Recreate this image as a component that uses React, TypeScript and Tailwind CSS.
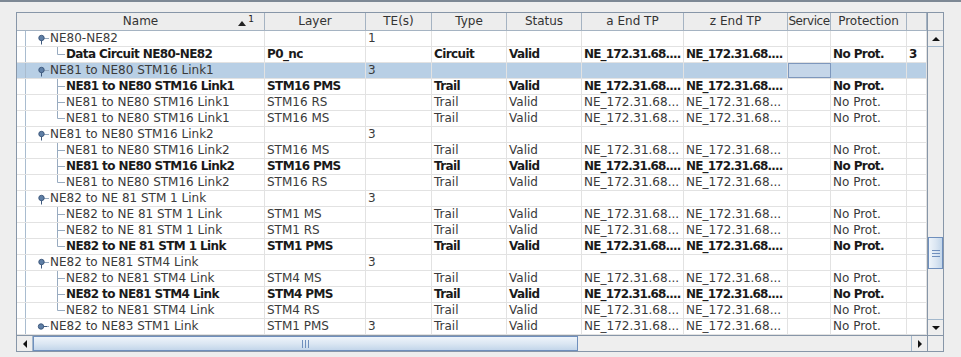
import React from "react";

type Kind = "open" | "closed" | "child";

interface Row {
  kind: Kind;
  last?: boolean;
  bold?: boolean;
  selected?: boolean;
  name: string;
  layer?: string;
  te?: string;
  type?: string;
  status?: string;
  a?: string;
  z?: string;
  prot?: string;
  extra?: string;
}

const cols = [
  { key: "name", w: "w-[248px]", label: "Name", head: "" },
  { key: "layer", w: "w-[101px]", label: "Layer", head: "" },
  { key: "te", w: "w-[66px]", label: "TE(s)", head: "" },
  { key: "type", w: "w-[75px]", label: "Type", head: "" },
  { key: "status", w: "w-[75px]", label: "Status", head: "" },
  { key: "a", w: "w-[102px]", label: "a End TP", head: "" },
  { key: "z", w: "w-[104px]", label: "z End TP", head: "" },
  { key: "service", w: "w-[43px]", label: "Service", head: "tracking-[-0.45px]" },
  { key: "prot", w: "w-[76px]", label: "Protection", head: "" },
  { key: "extra", w: "w-[20px]", label: "", head: "" },
];

// trail child rows share everything but name, layer, weight
const trail = (name: string, layer: string, bold = false, last = false): Row => ({
  kind: "child",
  name,
  layer,
  bold,
  last,
  type: "Trail",
  status: "Valid",
  a: bold ? "NE_172.31.68...." : "NE_172.31.68...",
  z: bold ? "NE_172.31.68...." : "NE_172.31.68...",
  prot: "No Prot.",
});

const rows: Row[] = [
  { kind: "open", name: "NE80-NE82", te: "1" },
  {
    kind: "child",
    last: true,
    bold: true,
    name: "Data Circuit NE80-NE82",
    layer: "P0_nc",
    type: "Circuit",
    status: "Valid",
    a: "NE_172.31.68....",
    z: "NE_172.31.68....",
    prot: "No Prot.",
    extra: "3",
  },
  { kind: "open", name: "NE81 to NE80 STM16 Link1", te: "3", selected: true },
  trail("NE81 to NE80 STM16 Link1", "STM16 PMS", true),
  trail("NE81 to NE80 STM16 Link1", "STM16 RS"),
  trail("NE81 to NE80 STM16 Link1", "STM16 MS", false, true),
  { kind: "open", name: "NE81 to NE80 STM16 Link2", te: "3" },
  trail("NE81 to NE80 STM16 Link2", "STM16 MS"),
  trail("NE81 to NE80 STM16 Link2", "STM16 PMS", true),
  trail("NE81 to NE80 STM16 Link2", "STM16 RS", false, true),
  { kind: "open", name: "NE82 to NE 81 STM 1 Link", te: "3" },
  trail("NE82 to NE 81 STM 1 Link", "STM1 MS"),
  trail("NE82 to NE 81 STM 1 Link", "STM1 RS"),
  trail("NE82 to NE 81 STM 1 Link", "STM1 PMS", true, true),
  { kind: "open", name: "NE82 to NE81 STM4 Link", te: "3" },
  trail("NE82 to NE81 STM4 Link", "STM4 MS"),
  trail("NE82 to NE81 STM4 Link", "STM4 PMS", true),
  trail("NE82 to NE81 STM4 Link", "STM4 RS", false, true),
  {
    kind: "closed",
    name: "NE82 to NE83 STM1 Link",
    layer: "STM1 PMS",
    te: "3",
    type: "Trail",
    status: "Valid",
    a: "NE_172.31.68...",
    z: "NE_172.31.68...",
    prot: "No Prot.",
  },
];

function TreeGlyph({ kind, last }: { kind: Kind; last?: boolean }) {
  const line = "#98abc0";
  const knob = "#3f5a7e";
  const w = kind === "child" ? 49 : 33;
  return (
    <svg width={w} height={15} className="shrink-0 overflow-visible" viewBox={`0 0 ${w} 15`}>
      <line x1={8.5} y1={0} x2={8.5} y2={16} stroke="#a9bccf" />
      {kind === "open" && (
        <g>
          <line x1={24.5} y1={9} x2={24.5} y2={13.5} stroke={knob} />
          <line x1={27} y1={7.5} x2={32} y2={7.5} stroke={line} />
          <circle cx={24.5} cy={7} r={2.7} fill="#5f7fa6" stroke={knob} />
        </g>
      )}
      {kind === "closed" && (
        <g>
          <line x1={26} y1={7.5} x2={30} y2={7.5} stroke={knob} />
          <line x1={30} y1={7.5} x2={32} y2={7.5} stroke={line} />
          <circle cx={24} cy={7.5} r={2.7} fill="#5f7fa6" stroke={knob} />
        </g>
      )}
      {kind === "child" && (
        <g>
          <line x1={40.5} y1={0} x2={40.5} y2={last ? 7.5 : 16} stroke={line} />
          <line x1={40.5} y1={7.5} x2={48} y2={7.5} stroke={line} />
        </g>
      )}
    </svg>
  );
}

function Arrow({ dir }: { dir: "up" | "down" | "left" | "right" }) {
  const pts = {
    up: "0,4 8,4 4,0",
    down: "0,0 8,0 4,4",
    left: "4,0 4,8 0,4",
    right: "0,0 0,8 4,4",
  }[dir];
  const vert = dir === "up" || dir === "down";
  return (
    <svg width={vert ? 8 : 4} height={vert ? 4 : 8} viewBox={vert ? "0 0 8 4" : "0 0 4 8"}>
      <polygon points={pts} fill="#111" />
    </svg>
  );
}

function DataRow({ row }: { row: Row }) {
  const text = row.bold ? "font-bold text-[#1a1a1a]" : "text-[#3a3a3a]";
  const values: Record<string, string | undefined> = {
    layer: row.layer,
    te: row.te,
    type: row.type,
    status: row.status,
    a: row.a,
    z: row.z,
    service: "",
    prot: row.prot,
    extra: row.extra,
  };
  return (
    <div className={`flex h-[16px] border-b border-[#e2e2e2] ${row.selected ? "bg-[#b8cfe5]" : "bg-white"}`}>
      {cols.map((c) => {
        const track = row.bold
          ? c.key === "a" || c.key === "z"
            ? "tracking-[-0.85px]"
            : "tracking-[-0.6px]"
          : "";
        if (c.key === "name") {
          return (
            <div key={c.key} className={`${c.w} shrink-0 flex items-center border-r border-[#e2e2e2] overflow-hidden whitespace-nowrap leading-[15px] ${text} ${track}`}>
              <TreeGlyph kind={row.kind} last={row.last} />
              <span>{row.name}</span>
            </div>
          );
        }
        if (c.key === "service" && row.selected) {
          return <div key={c.key} className={`${c.w} shrink-0 border border-[#7d97bd] bg-[#c5d6e9]`} />;
        }
        return (
          <div key={c.key} className={`${c.w} shrink-0 pl-[2px] border-r border-[#e2e2e2] overflow-hidden whitespace-nowrap leading-[15px] ${text} ${track}`}>
            {values[c.key]}
          </div>
        );
      })}
    </div>
  );
}

export default function App() {
  return (
    <div className="w-[961px] h-[357px] bg-[#eeeeee] overflow-hidden font-['DejaVu_Sans',sans-serif] text-[12px]">
      <div className="h-[2px] bg-[#7d8894]" />
      <div className="pt-[10px] pl-[16px]">
        <div className="w-[928px] border border-[#8796a8] flex flex-col">
          <div className="flex">
            {/* table */}
            <div className="w-[910px] flex flex-col">
              <div className="flex h-[18px] border-b border-[#a5b3c2] bg-[#ededed]">
                {cols.map((c) => (
                  <div
                    key={c.key}
                    className={`${c.w} shrink-0 relative flex items-center justify-center border-r border-[#a5b3c2] text-[#333] leading-[17px] whitespace-nowrap overflow-hidden ${c.head}`}
                  >
                    {c.label}
                    {c.key === "name" && (
                      <span className="absolute right-[10px] top-[1px] flex items-start gap-[2px]">
                        <svg width={8} height={5} viewBox="0 0 8 5" className="mt-[7px]">
                          <polygon points="0,5 8,5 4,0" fill="#222" />
                        </svg>
                        <span className="text-[9px] leading-[10px] text-[#222]">1</span>
                      </span>
                    )}
                  </div>
                ))}
              </div>
              {rows.map((r, i) => (
                <DataRow key={i} row={r} />
              ))}
            </div>
            {/* vertical scrollbar */}
            <div className="w-[16px] flex flex-col border-l border-[#8796a8]">
              <div className="h-[18px] border-b border-[#a5b3c2] bg-[#ededed]" />
              <div className="h-[16px] flex items-center justify-center border-b border-[#a3b8cc] bg-[#eeeeee]">
                <Arrow dir="up" />
              </div>
              <div className="h-[190px] bg-[#eeeeee]" />
              <div className="h-[32px] flex flex-col items-center justify-center gap-[2px] border border-[#6f8fbd] bg-linear-to-r from-[#eef4fa] via-[#dce7f3] to-[#c3d6ea]">
                <div className="w-[8px] h-px bg-[#6f8fbd]" />
                <div className="w-[8px] h-px bg-[#6f8fbd]" />
                <div className="w-[8px] h-px bg-[#6f8fbd]" />
              </div>
              <div className="flex-1 bg-[#eeeeee]" />
              <div className="h-[16px] flex items-center justify-center border-t border-[#a3b8cc] bg-[#eeeeee]">
                <Arrow dir="down" />
              </div>
            </div>
          </div>
          {/* horizontal scrollbar */}
          <div className="flex h-[16px] border-t border-[#8796a8]">
            <div className="w-[910px] flex">
              <div className="w-[16px] flex items-center justify-center border-r border-[#a3b8cc] bg-[#eeeeee]">
                <Arrow dir="left" />
              </div>
              <div className="w-[545px] flex items-center justify-center gap-[2px] border border-[#6f8fbd] bg-linear-to-b from-[#eef4fa] via-[#dce7f3] to-[#c3d6ea]">
                <div className="h-[8px] w-px bg-[#6f8fbd]" />
                <div className="h-[8px] w-px bg-[#6f8fbd]" />
                <div className="h-[8px] w-px bg-[#6f8fbd]" />
              </div>
              <div className="flex-1 bg-[#eeeeee]" />
              <div className="w-[16px] flex items-center justify-center border-l border-[#a3b8cc] bg-[#eeeeee]">
                <Arrow dir="right" />
              </div>
            </div>
            <div className="w-[16px] border-l border-[#8796a8] bg-[#eeeeee]" />
          </div>
        </div>
      </div>
    </div>
  );
}
